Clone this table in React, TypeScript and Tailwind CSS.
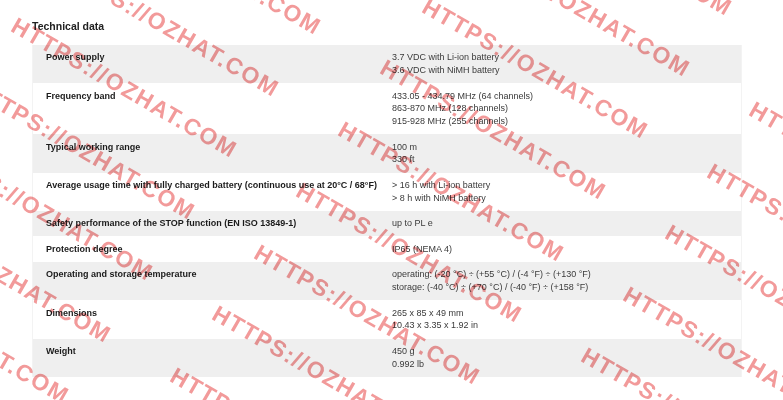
const ROWS: [string, string[]][] = [
  ["Power supply", ["3.7 VDC with Li-ion battery", "3.6 VDC with NiMH battery"]],
  [
    "Frequency band",
    ["433.05 - 434.79 MHz (64 channels)", "863-870 MHz (128 channels)", "915-928 MHz (255 channels)"],
  ],
  ["Typical working range", ["100 m", "330 ft"]],
  [
    "Average usage time with fully charged battery (continuous use at 20°C / 68°F)",
    ["> 16 h with Li-ion battery", "> 8 h with NiMH battery"],
  ],
  ["Safety performance of the STOP function (EN ISO 13849-1)", ["up to PL e"]],
  ["Protection degree", ["IP65 (NEMA 4)"]],
  [
    "Operating and storage temperature",
    [
      "operating: (-20 °C) ÷ (+55 °C) / (-4 °F) ÷ (+130 °F)",
      "storage: (-40 °C) ÷ (+70 °C) / (-40 °F) ÷ (+158 °F)",
    ],
  ],
  ["Dimensions", ["265 x 85 x 49 mm", "10.43 x 3.35 x 1.92 in"]],
  ["Weight", ["450 g", "0.992 lb"]],
];

// watermark lattice (screen coords of each stamp's top-left)
const ORIGIN = { x: 304, y: 182 };
const ACROSS = { x: 285, y: 165 };
const DOWN = { x: -42, y: 61.5 };

function stamps() {
  const out: { x: number; y: number; key: string }[] = [];
  for (let i = -3; i <= 3; i++) {
    for (let j = -6; j <= 10; j++) {
      const x = ORIGIN.x + i * ACROSS.x + j * DOWN.x;
      const y = ORIGIN.y + i * ACROSS.y + j * DOWN.y;
      if (x < -300 || x > 790 || y < -160 || y > 410) continue;
      out.push({ x, y, key: `${i}:${j}` });
    }
  }
  return out;
}

export default function App() {
  return (
    <div className="relative h-[400px] w-full overflow-hidden bg-white font-['Liberation_Sans',Arial,sans-serif]">
      <div className="pl-[32px] pt-[19.5px]">
        <h2 className="mb-[12.5px] text-[10.5px] font-bold leading-[13px] text-[#222]">
          Technical data
        </h2>

        <div className="w-[710px] border-x border-[#f3f3f3]">
          {ROWS.map(([label, values], idx) => (
            <div
              key={label}
              className={`grid grid-cols-[346px_1fr] py-[6.45px] text-[9px] leading-[12.7px] ${
                idx % 2 === 0 ? "bg-[#efefef]" : "bg-white"
              }`}
            >
              <div className="whitespace-nowrap px-[13px] font-bold text-[#1b1b1b]">{label}</div>
              <div className="px-[13px] text-[#3a3a3a]">
                {values.map((v) => (
                  <div key={v}>{v}</div>
                ))}
              </div>
            </div>
          ))}
        </div>
      </div>

      <div className="pointer-events-none absolute inset-0 overflow-hidden">
        {stamps().map((s) => (
          <span
            key={s.key}
            className="absolute origin-top-left rotate-[30deg] whitespace-nowrap text-[23px] font-bold leading-none tracking-[1.5px] text-[#f29a9a] mix-blend-multiply"
            style={{ left: s.x, top: s.y - 3 }}
          >
            HTTPS://OZHAT.COM
          </span>
        ))}
      </div>
    </div>
  );
}
